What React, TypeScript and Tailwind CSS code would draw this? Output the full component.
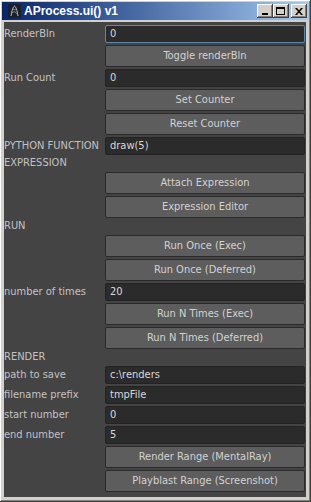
import React from 'react'

type Row =
  | { kind: 'field'; label?: string; value: string; focus?: boolean }
  | { kind: 'button'; text: string }
  | { kind: 'label'; text: string }

const rows: Row[] = [
  { kind: 'field', label: 'RenderBln', value: '0', focus: true },
  { kind: 'button', text: 'Toggle renderBln' },
  { kind: 'field', label: 'Run Count', value: '0' },
  { kind: 'button', text: 'Set Counter' },
  { kind: 'button', text: 'Reset Counter' },
  { kind: 'field', label: 'PYTHON FUNCTION', value: 'draw(5)' },
  { kind: 'label', text: 'EXPRESSION' },
  { kind: 'button', text: 'Attach Expression' },
  { kind: 'button', text: 'Expression Editor' },
  { kind: 'label', text: 'RUN' },
  { kind: 'button', text: 'Run Once (Exec)' },
  { kind: 'button', text: 'Run Once (Deferred)' },
  { kind: 'field', label: 'number of times', value: '20' },
  { kind: 'button', text: 'Run N Times (Exec)' },
  { kind: 'button', text: 'Run N Times (Deferred)' },
  { kind: 'label', text: 'RENDER' },
  { kind: 'field', label: 'path to save', value: 'c:\\renders' },
  { kind: 'field', label: 'filename prefix', value: 'tmpFile' },
  { kind: 'field', label: 'start number', value: '0' },
  { kind: 'field', label: 'end number', value: '5' },
  { kind: 'button', text: 'Render Range (MentalRay)' },
  { kind: 'button', text: 'Playblast Range (Screenshot)' },
]

function WinButton({ children }: { children: React.ReactNode }) {
  return (
    <div className="w-[16px] h-[14px] bg-[#d4d0c8] flex items-center justify-center shadow-[inset_-1px_-1px_0_#404040,inset_1px_1px_0_#ffffff,inset_-2px_-2px_0_#808080]">
      {children}
    </div>
  )
}

function TitleBar() {
  return (
    <div className="h-[18px] flex items-center bg-gradient-to-r from-[#0a246a] to-[#a6caf0] pl-[6px] pr-[2px]">
      <svg width="13" height="14" viewBox="0 0 13 14" className="shrink-0">
        <rect width="13" height="14" fill="#1a1f2a" />
        <path d="M3 12 C4 6 5 3 6.5 2 C8 3 9 6 10 12" stroke="#b8bcc4" strokeWidth="1" fill="none" />
        <path d="M4 9 C6 7 8 8 9 10 M5 5 C6.5 6 7 6 8 5" stroke="#8a909c" strokeWidth="1" fill="none" />
      </svg>
      <span className="ml-[3px] text-white font-bold text-[12px] leading-none" style={{ fontFamily: '"Liberation Sans", Arial, sans-serif' }}>
        AProcess.ui() v1
      </span>
      <div className="ml-auto flex items-center">
        <WinButton>
          <div className="w-[6px] h-[2px] bg-black mt-[6px] -ml-[1px]" />
        </WinButton>
        <WinButton>
          <div className="w-[9px] h-[8px] border border-black border-t-2 -ml-[1px]" />
        </WinButton>
        <div className="ml-[2px]">
          <WinButton>
            <svg width="8" height="7" viewBox="0 0 8 7" className="-ml-[1px]">
              <path d="M0 0 L2 0 L4 2.5 L6 0 L8 0 L5 3.5 L8 7 L6 7 L4 4.5 L2 7 L0 7 L3 3.5 Z" fill="#000" />
            </svg>
          </WinButton>
        </div>
      </div>
    </div>
  )
}

export default function App() {
  return (
    <div
      className="w-[311px] h-[502px] bg-[#d4d0c8] p-[2px] flex flex-col shadow-[inset_-1px_-1px_0_#404040,inset_1px_1px_0_#ffffff,inset_-2px_-2px_0_#808080]"
      style={{ fontFamily: '"Liberation Sans", Arial, sans-serif' }}
    >
      <TitleBar />
      <div
        className="flex-1 mt-[2px] ml-[2px] mr-[3px] mb-[3px] bg-[#444444] flex flex-col gap-[2px] pt-[3px] text-[11px]"
        style={{ fontFamily: '"DejaVu Sans Condensed", "Liberation Sans", sans-serif' }}
      >
        {rows.map((row, i) => (
          <div key={i} className="grid grid-cols-[101px_200px]">
            {row.kind === 'label' ? (
              <div className="h-[13px] flex items-center text-[#c2c2c2] col-span-2 whitespace-nowrap">{row.text}</div>
            ) : row.kind === 'field' ? (
              <>
                <div className="flex items-center text-[#c2c2c2] whitespace-nowrap">{row.label}</div>
                <div
                  className={`h-[18px] flex items-center px-[4px] bg-[#2b2b2b] text-[#d8d8d8] rounded-[2px] border ${
                    row.focus ? 'border-[#5b87ab]' : 'border-[#232323]'
                  }`}
                >
                  {row.value}
                </div>
              </>
            ) : (
              <>
                <div />
                <div className="h-[22px] flex items-center justify-center bg-[#5d5d5d] text-[#d2d2d2] rounded-[2px] border border-[#2a2a2a]">
                  {row.text}
                </div>
              </>
            )}
          </div>
        ))}
      </div>
    </div>
  )
}
